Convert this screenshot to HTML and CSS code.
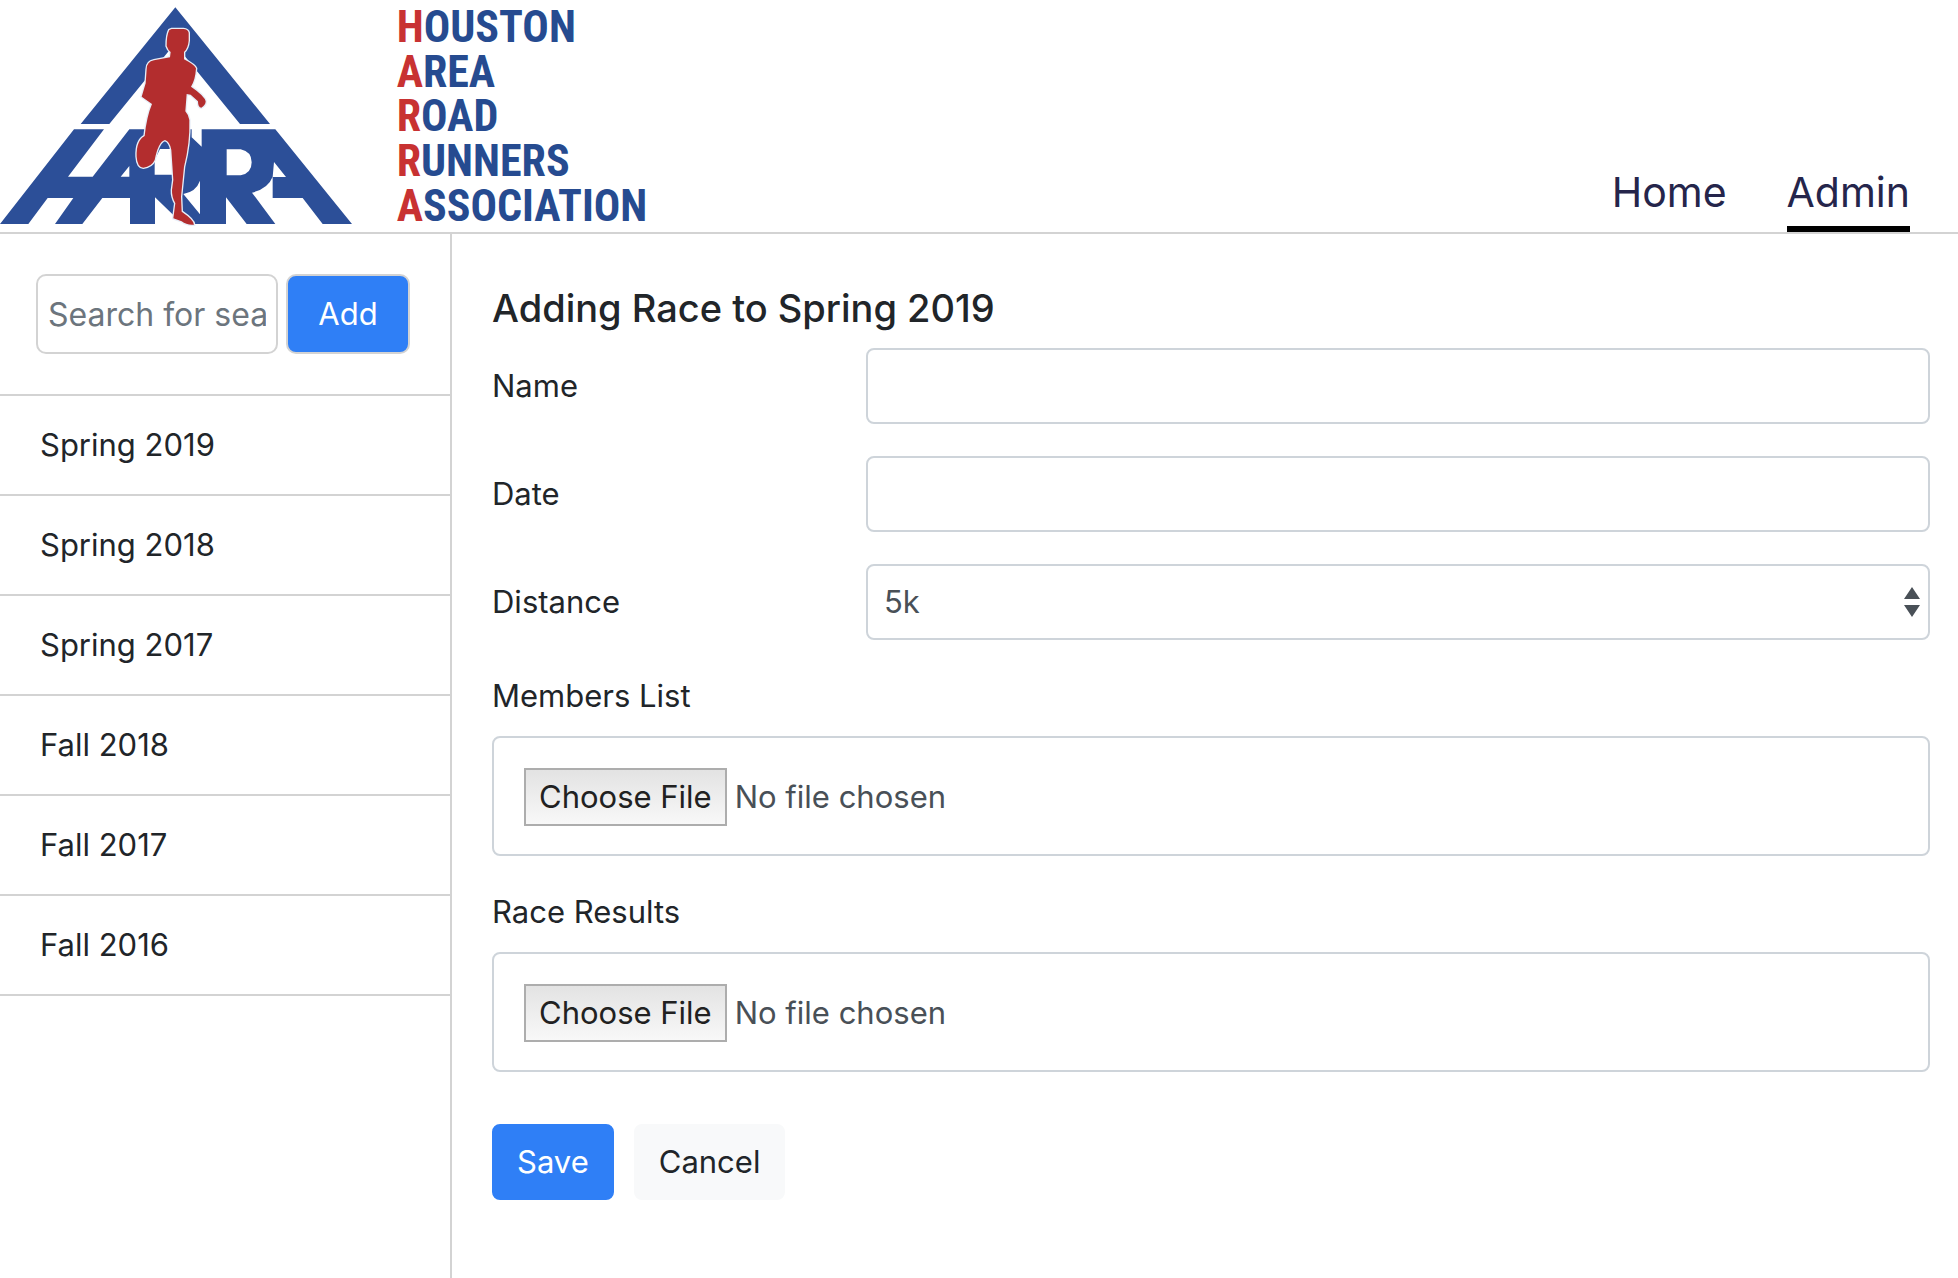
FILE: index.html
```html
<!DOCTYPE html>
<html lang="en">
    <head>
        <meta charset="utf-8">
        <title>HARRA</title>
        <link rel="stylesheet" href="styles.css">
    </head>
    <body>

        <header class="header">
            <svg class="logo" viewBox="0 0 1980 696" role="img" aria-label="Houston Area Road Runners Association">
                <!-- Triangle -->
                <path class="logo-blue" d="M526 22L810 372H720L524 131L328 372H242Z"/>
                <!-- Letters at the base -->
                <path class="logo-blue" fill-rule="evenodd" d="M222 388L0 672H85L143 594H220L165 672H247L307 594H390V672H465V592L530 655L585 672H678V592L740 672H826L756 578Q805 565 818 530V594H908L968 672H1056L826 388H605V440L575 412V388H388L278 530H204L312 388Z
                    M362 530L388 498V530Z
                    M680 448H722Q755 455 755 487Q755 520 722 526H680Z
                    M822 486L858 531H818Z
                    M464 480L480 447H520V524H464Z
                    M600 542Q588 575 550 582L600 643Z"/>
                <!-- Runner -->
                <path class="logo-runner" d="M508 90Q500 105 500 138Q504 150 512 156L510 172L462 181Q440 185 440 208L437 250L425 290L456 312Q440 350 434 408Q408 422 410 470Q412 502 430 503Q455 500 464 480Q475 425 495 420Q510 425 514 450L520 540L516 570Q515 590 526 610L520 655L545 664Q560 676 582 674Q582 660 545 635L543 590L552 500Q570 430 568 360Q566 345 556 334L560 282L572 284L594 304Q594 323 604 323Q617 316 617 304Q614 288 573 260Q586 240 588 205Q585 195 552 178L552 156Q564 145 566 122L566 98Q564 88 550 87H515Z"/>
                <text class="logo-text" x="1190" y="126"><tspan class="logo-initial">H</tspan>OUSTON</text>
                <text class="logo-text" x="1190" y="260"><tspan class="logo-initial">A</tspan>REA</text>
                <text class="logo-text" x="1190" y="394"><tspan class="logo-initial">R</tspan>OAD</text>
                <text class="logo-text" x="1190" y="528"><tspan class="logo-initial">R</tspan>UNNERS</text>
                <text class="logo-text" x="1190" y="662"><tspan class="logo-initial">A</tspan>SSOCIATION</text>
            </svg>
            <nav class="nav">
                <a class="nav-link" href="#">Home</a>
                <a class="nav-link active" href="#">Admin</a>
            </nav>
        </header>

        <div class="page">
            <aside class="sidebar">
                <form class="search">
                    <input class="search-input" type="text" placeholder="Search for season" aria-label="Search for season">
                    <button class="btn btn-add" type="button">Add</button>
                </form>
                <ul class="seasons">
                    <li><a class="season" href="#">Spring 2019</a></li>
                    <li><a class="season" href="#">Spring 2018</a></li>
                    <li><a class="season" href="#">Spring 2017</a></li>
                    <li><a class="season" href="#">Fall 2018</a></li>
                    <li><a class="season" href="#">Fall 2017</a></li>
                    <li><a class="season" href="#">Fall 2016</a></li>
                </ul>
            </aside>

            <main class="content">
                <h1 class="title">Adding Race to Spring 2019</h1>
                <form>
                    <div class="form-row">
                        <label class="row-label" for="name">Name</label>
                        <input class="form-control" type="text" id="name">
                    </div>
                    <div class="form-row">
                        <label class="row-label" for="date">Date</label>
                        <input class="form-control" type="text" id="date">
                    </div>
                    <div class="form-row">
                        <label class="row-label" for="distance">Distance</label>
                        <select class="form-control form-select" id="distance">
                            <option>5k</option>
                            <option>10k</option>
                        </select>
                    </div>
                    <div class="form-group">
                        <label class="group-label" for="members">Members List</label>
                        <input class="form-file" type="file" id="members">
                    </div>
                    <div class="form-group">
                        <label class="group-label" for="results">Race Results</label>
                        <input class="form-file" type="file" id="results">
                    </div>
                    <div class="actions">
                        <button class="btn btn-primary" type="button">Save</button>
                        <button class="btn btn-light" type="button">Cancel</button>
                    </div>
                </form>
            </main>
        </div>

    </body>
</html>
```
FILE: styles.css
```css
* {
    box-sizing: border-box;
}

body {
    margin: 0;
    min-height: 100vh;
    display: flex;
    flex-direction: column;
    font-family: Inter, "Liberation Sans", sans-serif;
    font-size: 31px;
    line-height: 48px;
    color: #212529;
    background-color: #fff;
}

input, select, button {
    font: inherit;
    color: inherit;
}

/* Header */
.header {
    display: flex;
    justify-content: space-between;
    align-items: flex-end;
    padding-right: 48px;
    border-bottom: 2px solid #d3d3d3;
}
.logo {
    display: block;
    width: 660px;
    height: 232px;
}
.logo-blue {
    fill: #2c4f98;
}
.logo-runner {
    fill: #b32d2e;
    stroke: #e8eef8;
    stroke-width: 8px;
    paint-order: stroke;
}
.logo-text {
    font-family: "Roboto Condensed", "Liberation Sans Narrow", sans-serif;
    font-weight: bold;
    font-size: 132px;
    fill: #264b90;
}
.logo-initial {
    fill: #c83232;
}
.nav {
    display: flex;
    gap: 60px;
}
.nav-link {
    padding-bottom: 6px;
    border-bottom: 6px solid transparent;
    font-size: 41px;
    line-height: 56px;
    color: #25254b;
    text-decoration: none;
}
.nav-link.active {
    border-bottom-color: #000;
}

/* Sidebar */
.page {
    display: flex;
    flex: 1;
}
.sidebar {
    flex: none;
    width: 452px;
    border-right: 2px solid #d3d3d3;
}
.search {
    display: flex;
    gap: 8px;
    padding: 40px 40px 40px 36px;
    border-bottom: 2px solid #d3d3d3;
}
.search-input {
    flex: 1;
    min-width: 0;
    height: 80px;
    padding: 0 10px;
    border: 2px solid #d3d3d3;
    border-radius: 10px;
    background-color: #fff;
    font-size: 32px;
}
.search-input::placeholder {
    color: #6c757d;
    opacity: 1;
}
.seasons {
    margin: 0;
    padding: 0;
    list-style: none;
}
.season {
    display: block;
    padding: 25px 40px;
    border-bottom: 2px solid #d3d3d3;
    color: inherit;
    text-decoration: none;
}

/* Form */
.content {
    flex: 1;
    min-width: 0;
    padding: 50px 28px 50px 40px;
}
.title {
    margin: 0 0 16px;
    font-size: 38px;
    font-weight: 500;
    line-height: 48px;
}
.form-row {
    display: flex;
    align-items: center;
    margin-bottom: 32px;
}
.row-label {
    flex: 0 0 26%;
}
.form-control {
    flex: 1;
    min-width: 0;
    height: 76px;
    padding: 0 16px;
    border: 2px solid #ced4da;
    border-radius: 8px;
    background-color: #fff;
    color: #495057;
}
.form-select {
    appearance: none;
    background: #fff url("data:image/svg+xml,%3Csvg xmlns='http://www.w3.org/2000/svg' viewBox='0 0 16 30'%3E%3Cpath fill='%23495057' d='M8 0L16 12H0zM8 30L0 18h16z'/%3E%3C/svg%3E") no-repeat right 8px center / 16px 30px;
}
.form-group {
    margin-bottom: 32px;
}
.group-label {
    display: block;
    margin-bottom: 16px;
}
.form-file {
    display: block;
    width: 100%;
    height: 120px;
    padding: 30px;
    border: 2px solid #ced4da;
    border-radius: 8px;
    color: #495057;
}
.form-file::file-selector-button {
    height: 58px;
    margin: 0 8px 0 0;
    padding: 0 13px;
    border: 2px solid #adadad;
    border-radius: 0;
    background: linear-gradient(#e3e3e3, #f8f8f8);
    font: inherit;
    color: #212121;
}
.actions {
    display: flex;
    gap: 20px;
    padding-top: 20px;
}
.btn {
    height: 76px;
    padding: 0 23px;
    border: 2px solid transparent;
    border-radius: 8px;
}
.btn-primary {
    background-color: #2f7ff6;
    border-color: #2f7ff6;
    color: #fff;
}
.btn-light {
    background-color: #f8f9fa;
    border-color: #f8f9fa;
}
.btn-add {
    width: 124px;
    height: 80px;
    border-color: #d3d3d3;
    border-radius: 10px;
    background-color: #2f7ff6;
    color: #fff;
}
```
